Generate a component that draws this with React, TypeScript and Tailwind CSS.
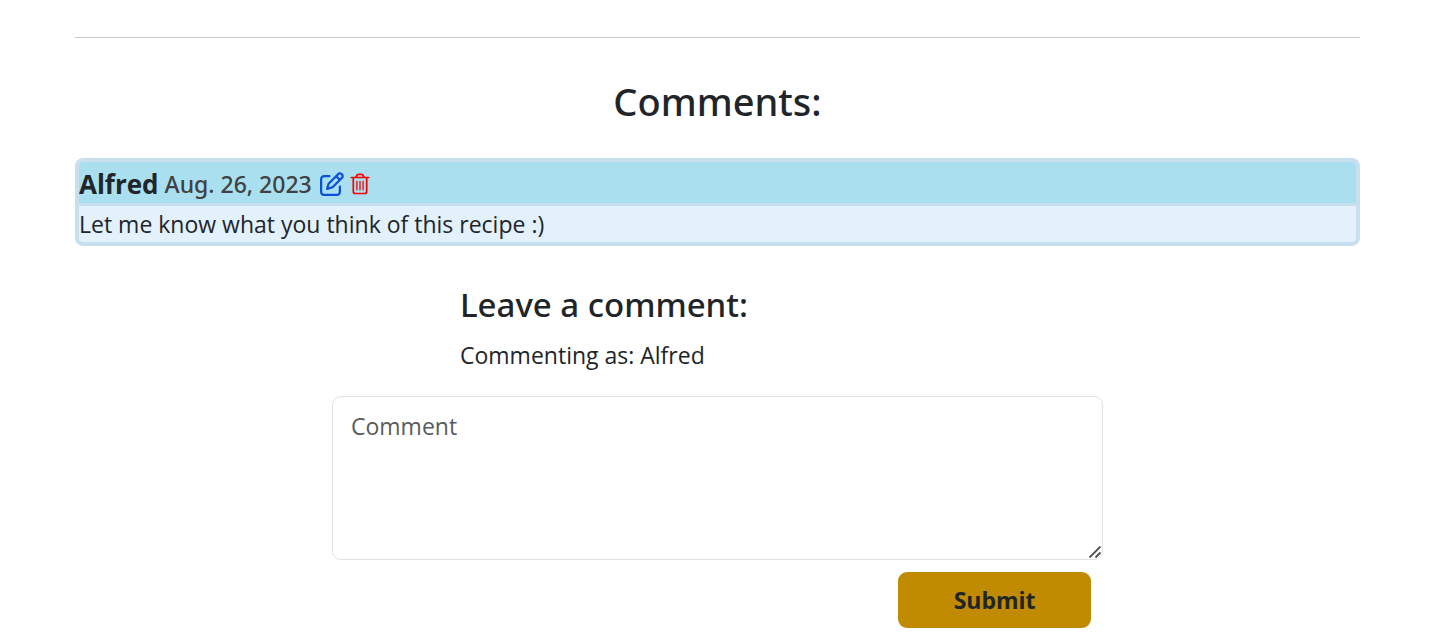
import React from "react";
import { FaRegPenToSquare } from "react-icons/fa6";

type Comment = { id: number; author: string; date: string; isoDate: string; body: string };

const comments: Comment[] = [
  {
    id: 1,
    author: "Alfred",
    date: "Aug. 26, 2023",
    isoDate: "2023-08-26",
    body: "Let me know what you think of this recipe :)",
  },
];

function TrashIcon() {
  return (
    <svg
      className="h-[22px] w-5"
      viewBox="0 0 20 22"
      fill="none"
      stroke="currentColor"
      strokeWidth="1.7"
      strokeLinecap="round"
      strokeLinejoin="round"
      aria-hidden="true"
    >
      <path d="M1.3 4.5h17.4M5.8 4.3 7.4 1.8Q7.8 1.3 8.4 1.3h3.2q.6 0 1 .5l1.6 2.5M3.3 4.8V18.5a2 2 0 0 0 2 2h9.4a2 2 0 0 0 2-2V4.8" />
      <path strokeWidth="1.3" d="M6.9 8.5v8.3M10 8.5v8.3M13.1 8.5v8.3" />
    </svg>
  );
}

function CommentCard({ author, date, isoDate, body }: Comment) {
  return (
    <article className="overflow-hidden rounded-lg border-4 border-[#c8dff0] bg-[#e2f1fc]">
      <header className="flex h-11 items-center border-b-3 border-[#c8dff0] bg-[#a9dfef] pt-0.5">
        <strong className="text-[26px] font-bold">{author}</strong>
        <time dateTime={isoDate} className="ml-1.5 font-['Noto_Sans',sans-serif] font-medium text-[#3f4144]">
          {date}
        </time>
        <button type="button" aria-label={`Edit comment by ${author}`} className="ml-2 text-[#0b50dd]">
          <FaRegPenToSquare className="size-6" />
        </button>
        <button type="button" aria-label={`Delete comment by ${author}`} className="ml-1.5 text-[#ff0000]">
          <TrashIcon />
        </button>
      </header>
      <p className="leading-9">{body}</p>
    </article>
  );
}

function ResizeGrip() {
  return (
    <svg
      className="pointer-events-none absolute right-0.5 bottom-0.5 size-3"
      viewBox="0 0 12 12"
      stroke="#4a4a4a"
      strokeWidth="1.8"
      aria-hidden="true"
    >
      <path d="M0.5 11.5 11.5 0.5M6.5 11.5 11.5 6.5" />
    </svg>
  );
}

export default function App() {
  return (
    <main className="bg-white pt-[37px] pr-[86px] pl-[75px] font-['Open_Sans',sans-serif] text-[23px] leading-9 text-[#212529]">
      <hr className="border-[#c8c9ca]" />
      <h2 className="mt-[39px] text-center font-['Noto_Sans',sans-serif] text-[38px] leading-12 font-medium">
        Comments:
      </h2>
      <section aria-label="Comments" className="mt-[33px]">
        {comments.map((comment) => (
          <CommentCard key={comment.id} {...comment} />
        ))}
      </section>

      <form className="mx-auto mt-[35px] w-3/5" onSubmit={(event) => event.preventDefault()}>
        <div className="ml-[128px]">
          <h3 className="font-['Noto_Sans',sans-serif] text-[33px] leading-12 font-medium">Leave a comment:</h3>
          <p className="mt-2">Commenting as: Alfred</p>
        </div>
        <div className="relative mt-[23px]">
          <textarea
            aria-label="Comment"
            placeholder="Comment"
            className="block h-[164px] w-full resize-y rounded-[9px] border border-[#dee2e6] px-[18px] py-[11px] placeholder:text-[#595c5f] [&::-webkit-resizer]:bg-transparent"
          />
          <ResizeGrip />
        </div>
        <div className="mt-3 flex justify-end">
          <button type="submit" className="mr-3 h-14 w-1/4 rounded-[9px] bg-[#c08b00] font-bold">
            Submit
          </button>
        </div>
      </form>
    </main>
  );
}
